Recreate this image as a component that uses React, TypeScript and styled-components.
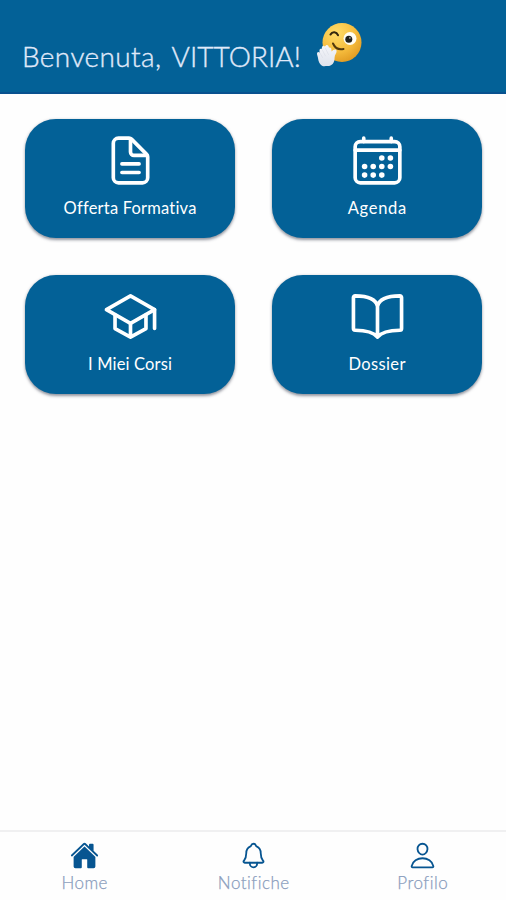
import React from "react";
import styled, { createGlobalStyle } from "styled-components";

const Global = createGlobalStyle`
  * { box-sizing: border-box; }
  body { margin: 0; background: #fefefe; font-family: Lato, "Open Sans", sans-serif; }
`;

const Screen = styled.div`
  display: flex;
  flex-direction: column;
  height: 900px;
  overflow: hidden;
  background: #fefefe;
`;

const Header = styled.header`
  display: flex;
  align-items: flex-start;
  height: 94px;
  padding: 21px 22px 0;
  background: #036197;
  border-bottom: 2px solid #08518f;
`;

const Greeting = styled.h1`
  width: 294px;
  margin: 17px 0 0;
  font-size: 28px;
  line-height: 36px;
  font-weight: 300;
  letter-spacing: 0.4px;
  word-spacing: 2px;
  white-space: nowrap;
  color: #e0eafa;
  -webkit-text-stroke: 0.35px #e0eafa;
`;

const GuestName = styled.span`
  letter-spacing: 0.05px;
`;

const Tiles = styled.main`
  flex: 1;
  display: grid;
  grid-template-columns: 210px 210px;
  grid-auto-rows: 119px;
  gap: 37px;
  padding: 25px 25px 0;
`;

const Tile = styled.button`
  display: flex;
  flex-direction: column;
  align-items: center;
  padding: 14px 0 0;
  border: 0;
  border-radius: 31px;
  background: #036197;
  color: #fff;
  font-family: inherit;
  box-shadow: 0 1.5px 3px rgba(40, 45, 65, 0.5);
`;

const TileLabel = styled.span<{ $spacing: number }>`
  margin-top: 9px;
  font-size: 16.5px;
  line-height: 22px;
  letter-spacing: ${(p) => p.$spacing}px;
  margin-right: ${(p) => -p.$spacing}px;
  white-space: nowrap;
`;

const TileIcon = styled.svg`
  display: block;
  width: 55px;
  height: 55px;
  fill: none;
  stroke: currentColor;
  stroke-width: 34;
  stroke-linecap: round;
  stroke-linejoin: round;
`;

const TabBar = styled.nav`
  display: grid;
  grid-template-columns: repeat(3, 169px);
  height: 70px;
  border-top: 2px solid #f0f0f1;
`;

const Tab = styled.button`
  display: flex;
  flex-direction: column;
  align-items: center;
  padding: 9px 0 0;
  border: 0;
  background: none;
  color: #075591;
  font-family: inherit;
`;

const TabIcon = styled.svg`
  display: block;
  width: 29px;
  height: 29px;
  fill: none;
  stroke: currentColor;
  stroke-width: 32;
  stroke-linecap: round;
  stroke-linejoin: round;
`;

const TabLabel = styled.span<{ $spacing: number }>`
  margin-top: 2px;
  font-size: 17px;
  line-height: 22px;
  font-weight: 300;
  letter-spacing: ${(p) => p.$spacing}px;
  margin-right: ${(p) => -p.$spacing}px;
  color: #8a9dbd;
  -webkit-text-stroke: 0.25px #8a9dbd;
`;

const Emoji = () => (
  <svg width="46" height="48" viewBox="0 0 46 48" aria-label="Saluto">
    <defs>
      <radialGradient id="face" cx="35%" cy="25%" r="80%">
        <stop offset="0" stopColor="#ffdc68" />
        <stop offset=".6" stopColor="#f6bd3e" />
        <stop offset="1" stopColor="#e19b22" />
      </radialGradient>
      <linearGradient id="hand" x1="0" y1="0" x2="0" y2="1">
        <stop offset="0" stopColor="#f5f6fa" />
        <stop offset="1" stopColor="#dfe3ec" />
      </linearGradient>
    </defs>
    <circle cx="26" cy="21.500" r="19.500" fill="url(#face)" />
    <circle cx="34" cy="17.500" r="6.500" fill="#fffdf4" />
    <circle cx="32.800" cy="18.300" r="3.500" fill="#20201d" />
    <circle cx="33.900" cy="16.900" r=".7" fill="#fff" />
    <path d="M14.500 13.500c2-3.500 6-2.800 7.500.700" fill="none" stroke="#33260d" strokeWidth="2.100" strokeLinecap="round" />
    <path d="M17 22.500c2 4.500 6 6.500 10.500 5.500" fill="none" stroke="#51380d" strokeWidth="2" strokeLinecap="round" />
    <path d="M5 44c-3-3-2.400-6-3.800-10-.8-2.400 1-4 2.500-2.300-.7-3 .2-4.600 2-3.600 0-3 1.700-4.200 3.200-2.500 1.600-3 3.900-1.500 4 1 2.300-.4 2.600 1.200 2.700 4 1.500-2.200 4.700-2.800 5-.7.2 2-2 3.700-2 6.500 0 5.500-2.800 8.600-7 8.700-3 0-5 .6-6.600-1.100z" fill="url(#hand)" />
    <path d="m4 32 2.500 4.500M6.300 29 9.500 35M9.500 27.500l3 6" fill="none" stroke="#d5d9e3" strokeWidth=".5" strokeLinecap="round" />
  </svg>
);

const calendarDots = [
  [296, 232], [376, 232],
  [136, 312], [216, 312], [296, 312], [376, 312],
  [136, 392], [216, 392], [296, 392],
];

const tiles = [
  {
    label: "Offerta Formativa", spacing: 0.2,
    art: <><path d="M416 221.250V416a48 48 0 01-48 48H144a48 48 0 01-48-48V96a48 48 0 0148-48h98.750a32 32 0 0122.620 9.370l141.260 141.260a32 32 0 019.370 22.620z" /><path d="M256 56v120a32 32 0 0032 32h120M176 288h160M176 368h160" /></>,
  },
  {
    label: "Agenda", spacing: 0.7,
    art: <><rect x="48" y="80" width="416" height="384" rx="48" /><path d="M128 48v32M384 48v32M464 160H48" />{calendarDots.map(([x, y]) => <circle key={`${x}-${y}`} cx={x} cy={y} r="26" fill="currentColor" stroke="none" />)}</>,
  },
  {
    label: "I Miei Corsi", spacing: 0.15,
    art: <><path d="M32 192L256 64l224 128-224 128L32 192z" /><path d="M112 240v128l144 80 144-80V240M480 368V192M256 320v128" /></>,
  },
  {
    label: "Dossier", spacing: 0.35,
    art: <path d="M256 160c16-63.160 76.430-95.410 208-96a15.940 15.940 0 0116 16v288a16 16 0 01-16 16c-128 0-177.450 25.810-208 64-30.370-38-80-64-208-64-9.880 0-16-8.050-16-17.930V80a15.940 15.940 0 0116-16c131.570.590 192 32.840 208 96zM256 160v288" />,
  },
];

const tabs = [
  {
    label: "Home", spacing: 0.45,
    art: <g fill="currentColor" stroke="none"><path d="M261.560 101.280a8 8 0 00-11.060 0L66.400 277.150a8 8 0 00-2.470 5.790L63.900 448a32 32 0 0032 32H192a16 16 0 0016-16V328a8 8 0 018-8h80a8 8 0 018 8v136a16 16 0 0016 16h96.060a32 32 0 0032-32V282.940a8 8 0 00-2.470-5.790z" /><path d="M490.910 244.150l-74.800-71.560V64a16 16 0 00-16-16h-48a16 16 0 00-16 16v32l-57.920-55.380C272.770 35.140 264.710 32 256 32c-8.680 0-16.720 3.140-22.140 8.630l-212.700 203.500c-6.220 6-7 15.870-1.340 22.370A16 16 0 0043 267.560L250.500 69.280a8 8 0 0111.060 0l207.520 198.280a16 16 0 0022.590-.440c6.140-6.360 5.630-16.860-.760-22.970z" /></g>,
  },
  {
    label: "Notifiche", spacing: 0.5,
    art: <><path d="M427.680 351.430C402 320 383.870 304 383.870 217.350 383.870 138 343.350 109.730 310 96c-4.430-1.820-8.600-6-9.950-10.550C294.200 65.540 277.800 48 256 48s-38.210 17.550-44 37.470c-1.350 4.600-5.520 8.710-9.950 10.530-33.390 13.750-73.870 41.920-73.870 121.350C128.130 304 110 320 84.320 351.430 73.680 364.450 83 384 101.610 384h308.880c18.510 0 27.770-19.610 17.190-32.570z" /><path d="M320 384v16a64 64 0 01-128 0v-16" /></>,
  },
  {
    label: "Profilo", spacing: 0.5,
    art: <><path d="M344 144c-3.920 52.870-44 96-88 96s-84.150-43.120-88-96c-4-55 35-96 88-96s92 42 88 96z" /><path d="M256 304c-87 0-175.300 48-191.640 138.600C62.390 453.520 68.570 464 80 464h352c11.440 0 17.620-10.480 15.650-21.400C431.300 352 343 304 256 304z" /></>,
  },
];

export default function App() {
  return (
    <Screen>
      <Global />
      <Header>
        <Greeting>Benvenuta, <GuestName>VITTORIA!</GuestName></Greeting>
        <Emoji />
      </Header>
      <Tiles>
        {tiles.map(({ label, spacing, art }) => (
          <Tile key={label}>
            <TileIcon viewBox="0 0 512 512">{art}</TileIcon>
            <TileLabel $spacing={spacing}>{label}</TileLabel>
          </Tile>
        ))}
      </Tiles>
      <TabBar>
        {tabs.map(({ label, spacing, art }) => (
          <Tab key={label}>
            <TabIcon viewBox="0 0 512 512">{art}</TabIcon>
            <TabLabel $spacing={spacing}>{label}</TabLabel>
          </Tab>
        ))}
      </TabBar>
    </Screen>
  );
}
